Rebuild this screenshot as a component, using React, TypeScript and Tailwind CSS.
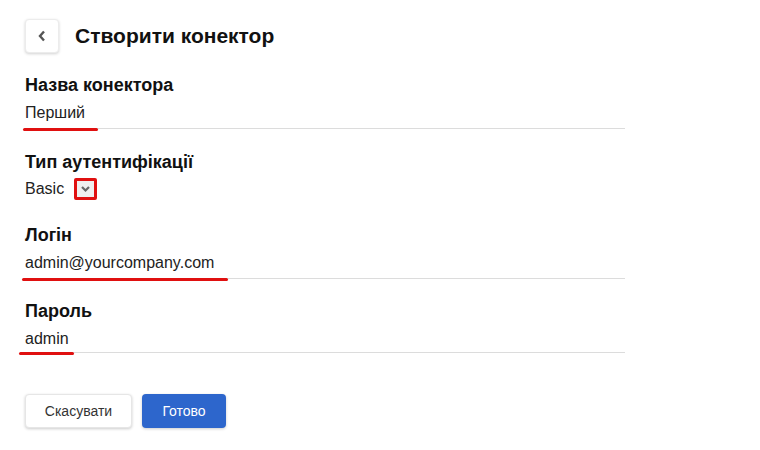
import React from 'react';

const font = { fontFamily: '"Liberation Sans", Arial, sans-serif' };

interface FieldProps {
  label: string;
  value: string;
  markWidth: number;
  markLeft: string;
  tight?: boolean;
}

const Field: React.FC<FieldProps> = ({ label, value, markWidth, markLeft, tight }) => (
  <div className="w-[600px]">
    <div className="text-[18px] font-bold text-[#111] leading-[20px]">{label}</div>
    <div className={`relative mt-[9px] border-b border-[#dcdcdc] ${tight ? 'pb-[4px]' : 'pb-[6px]'}`}>
      <div className="text-[16px] text-[#222] leading-[18px]">{value}</div>
      <div
        className={`absolute bottom-[-3px] h-[3px] rounded-full bg-[#e01010] ${markLeft}`}
        style={{ width: markWidth }}
      />
    </div>
  </div>
);

export default function App() {
  return (
    <div className="w-[760px] h-[450px] bg-white px-[25px] pt-[19px]" style={font}>
      <div className="flex items-center gap-[16px]">
        <button className="w-[34px] h-[34px] rounded-[4px] bg-white border border-[#ececec] shadow-[0_1px_3px_rgba(0,0,0,0.18)] flex items-center justify-center">
          <svg width="10" height="12" viewBox="0 0 10 12">
            <path d="M7 1.5 L3 6 L7 10.5" fill="none" stroke="#555" strokeWidth="2.4" />
          </svg>
        </button>
        <h1 className="text-[21px] font-bold text-[#111]">Створити конектор</h1>
      </div>

      <div className="mt-[22px] flex flex-col">
        <Field label="Назва конектора" value="Перший" markWidth={75} markLeft="left-[-2px]" />

        <div className="mt-[23px]">
          <div className="text-[18px] font-bold text-[#111] leading-[20px]">Тип аутентифікації</div>
          <div className="mt-[6px] flex items-center gap-[10px]">
            <span className="text-[16px] text-[#222] leading-[18px]">Basic</span>
            <span className="w-[23px] h-[22px] rounded-[2px] border-[3px] border-[#e01010] bg-[#efefef] flex items-center justify-center">
              <svg width="11" height="8" viewBox="0 0 11 8">
                <path d="M2 2 L5.5 5.5 L9 2" fill="none" stroke="#666" strokeWidth="2.2" />
              </svg>
            </span>
          </div>
        </div>

        <div className="mt-[25px]">
          <Field label="Логін" value="admin@yourcompany.com" markWidth={206} markLeft="left-[-3px]" />
        </div>

        <div className="mt-[22px]">
          <Field label="Пароль" value="admin" markWidth={55} markLeft="left-[-6px]" tight />
        </div>
      </div>

      <div className="mt-[41px] flex gap-[10px]">
        <button className="w-[107px] h-[34px] rounded-[4px] bg-white border border-[#e6e6e6] shadow-[0_1px_3px_rgba(0,0,0,0.2)] text-[14px] text-[#333]">
          Скасувати
        </button>
        <button className="w-[84px] h-[34px] rounded-[4px] bg-[#2d66cc] shadow-[0_1px_3px_rgba(0,0,0,0.2)] text-[14px] text-white">
          Готово
        </button>
      </div>
    </div>
  );
}
